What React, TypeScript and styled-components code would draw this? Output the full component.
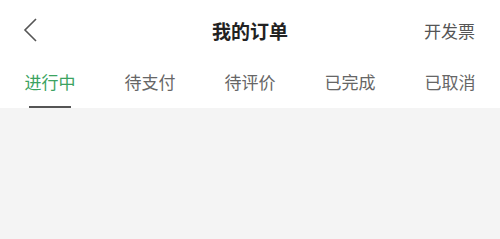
import React, { useState } from 'react';
import styled, { createGlobalStyle } from 'styled-components';

const GlobalStyle = createGlobalStyle`
  html, body {
    margin: 0;
    padding: 0;
    background: #f4f4f4;
    font-family: "Noto Sans CJK SC", "Noto Sans", sans-serif;
  }
`;

const Page = styled.div`
  width: 500px;
  min-height: 239px;
  background: #f4f4f4;
`;

const TopBar = styled.div`
  background: #fff;
`;

const NavBar = styled.div`
  height: 60px;
  display: grid;
  grid-template-columns: 100px 1fr 100px;
  align-items: center;
`;

const BackButton = styled.button`
  border: 0;
  background: none;
  padding: 0 0 0 22px;
  height: 60px;
  display: flex;
  align-items: center;
  cursor: pointer;
`;

const Title = styled.h1`
  margin: 0;
  text-align: center;
  font-size: 19px;
  font-weight: 700;
  color: #222;
`;

const Invoice = styled.span`
  text-align: right;
  padding-right: 25px;
  font-size: 17px;
  color: #555;
`;

const Tabs = styled.div`
  height: 48px;
  display: flex;
`;

const Tab = styled.div<{ $active: boolean }>`
  flex: 1;
  position: relative;
  display: flex;
  justify-content: center;
  padding-top: 9px;
  font-size: 17px;
  color: ${(p) => (p.$active ? '#3ba361' : '#666')};
  cursor: pointer;

  &::after {
    content: '';
    display: ${(p) => (p.$active ? 'block' : 'none')};
    position: absolute;
    bottom: 0;
    left: 50%;
    width: 42px;
    margin-left: -21px;
    height: 2px;
    background: #555;
  }
`;

const tabs = ['进行中', '待支付', '待评价', '已完成', '已取消'];

export default function App() {
  const [active, setActive] = useState(0);
  return (
    <>
      <GlobalStyle />
      <Page>
        <TopBar>
          <NavBar>
            <BackButton aria-label="back">
              <svg width="16" height="26" viewBox="0 0 16 26">
                <path d="M14 2 L3 13 L14 24" fill="none" stroke="#555" strokeWidth="1.6" />
              </svg>
            </BackButton>
            <Title>我的订单</Title>
            <Invoice>开发票</Invoice>
          </NavBar>
          <Tabs>
            {tabs.map((t, i) => (
              <Tab key={t} $active={i === active} onClick={() => setActive(i)}>
                {t}
              </Tab>
            ))}
          </Tabs>
        </TopBar>
      </Page>
    </>
  );
}
